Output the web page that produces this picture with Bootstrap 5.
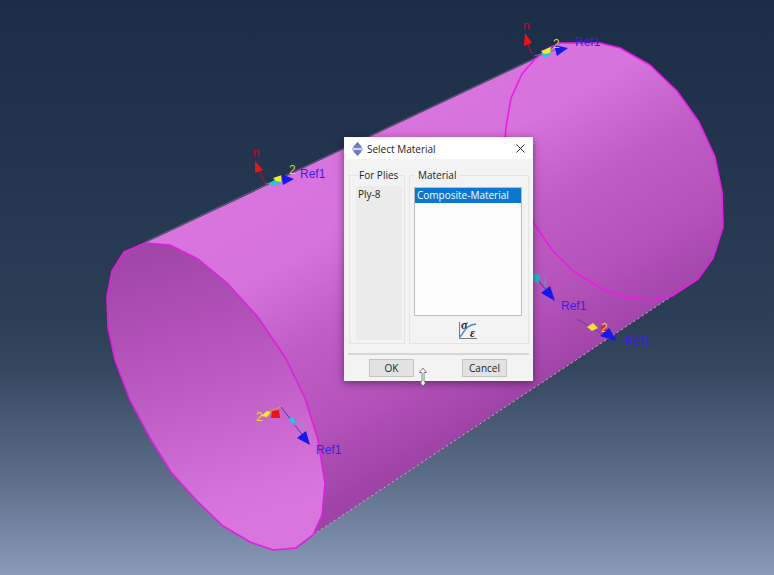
<!DOCTYPE html>
<html lang="en">
<head>
<meta charset="utf-8">
<meta name="viewport" content="width=device-width, initial-scale=1">
<title>Select Material</title>
<link href="https://cdn.jsdelivr.net/npm/bootstrap@5.3.0/dist/css/bootstrap.min.css" rel="stylesheet">
<style>
body { font-family: "Open Sans", "Noto Sans", sans-serif; font-size: 10px; line-height: 14px; color: #222; }
.viewport3d { background: linear-gradient(#1c2d47 0%, #24354f 30%, #2d3e57 56%, #35475f 64%, #5c6d89 83%, #8a9aba 100%); }
.scene text { font-family: "Liberation Sans", Arial, sans-serif; font-size: 12px; }
.dlg { left: 344px; top: 137px; width: 189px; background: #f3f3f3; box-shadow: 0 2px 8px rgba(30,0,40,.5); border: 1px solid #f8f8f8; }
.dlg-title { height: 21px; background: #fff; padding: 0 7px; }
.dlg h1 { font-size: 10px; line-height: 14px; }
.close-x { line-height: 0; }
.groups { padding: 9px 3px 9px 4px; gap: 4px; }
.group { border: 1px solid #e4e4e4; padding: 0 6px 3px 4px; min-width: 0; }
.group legend { font-size: 10px; line-height: 14px; height: 14px; margin-top: -7px; background: #f3f3f3; float: none; }
.plies { flex: 0 0 56px; padding: 0 2px 3px 6px; }
.plies legend { margin-left: 3px; }
.ply-list { background: #ebebeb; margin-top: 4px; padding: 1px 2px; }
.mat-list { height: 129px; margin-top: 5px; border: 1px solid #bdbdbd; border-radius: 0; background: #fdfdfd; overflow: hidden; font-size: 10px; outline: 0; }
.mat-list option { height: 15px; min-height: 15px; line-height: 15px; padding: 0 2px; }
.mat-list option:checked { background: #0a78d2 linear-gradient(#0a78d2, #0a78d2); color: #fff; -webkit-text-fill-color: #fff; }
.foot { border-top: 2px solid #d6d6d6; margin: 0 3px; padding: 4px 22px 3px 21px; }
.push { width: 45px; height: 18px; font-size: 10px; line-height: 14px; background: #e2e2e2; border: 1px solid #c4c4c4; color: #222; }
.pointer { left: 73px; top: 229px; }
.curve { overflow: visible; }
</style>
<script src="https://cdn.jsdelivr.net/npm/bootstrap@5.3.0/dist/js/bootstrap.bundle.min.js"></script>
</head>
<body>
<main class="viewport3d position-relative vh-100 overflow-hidden">
<svg class="scene d-block w-100 h-100" viewBox="0 0 774 575" preserveAspectRatio="xMinYMin slice" role="img" aria-label="Cylindrical shell with ply orientations">
  <defs>
    <linearGradient id="outer" gradientUnits="userSpaceOnUse" x1="340" y1="150" x2="492" y2="414">
      <stop offset="0" stop-color="#d973de"/><stop offset=".22" stop-color="#d773dc"/><stop offset=".5" stop-color="#bf5cc5"/><stop offset=".75" stop-color="#b553bb"/><stop offset="1" stop-color="#a043a7"/>
    </linearGradient>
    <linearGradient id="inner" gradientUnits="userSpaceOnUse" x1="165" y1="250" x2="240" y2="520">
      <stop offset="0" stop-color="#a146a8"/><stop offset=".3" stop-color="#b251b8"/><stop offset=".5" stop-color="#bc5bc2"/><stop offset=".9" stop-color="#d573da"/><stop offset="1" stop-color="#d876dd"/>
    </linearGradient>
  </defs>
  <path fill="url(#outer)" d="M145 243 535 59 560 43 600 43 620 48 650 65 677 91 699 122 715 157 722 192 723 227 713 258 698 279 672 296 313 535 200 400z"/>
  <path d="M145 242 535 58" stroke="#b47fc0" stroke-width="1" fill="none" opacity=".5"/>
  <path d="M313 535 672 296" stroke="#c9b6cf" stroke-width="1" stroke-dasharray="2 3" fill="none"/>
  <path id="front" fill="url(#inner)" stroke="#e01fe0" stroke-width="1.6" stroke-linejoin="round" d="M145 243 170 245 198 259 227 283 257 316 285 357 305 398 318 440 325 483 322 515 313 535 296 548 273 550 250 542 223 526 197 501 171 472 150 438 130 400 115 360 108 327 107 297 112 271 124 252z"/>
  <path fill="none" stroke="#ec1be6" stroke-width="1.6" stroke-linejoin="round" d="M535 59 547 49 560 43 600 43 620 48 650 65 677 91 699 122 715 157 722 192 723 227 713 258 698 279 672 296 652 300 628 298 600 288 573 271 552 250 535 225 515 178 505 140 506 127 511 98 522 74z"/>

  <!-- orientation triad, back edge -->
  <g>
    <path d="M532 54 527 42" stroke="#b5142b"/><path fill="#f21212" d="M525 33 532 43 524 46z"/>
    <text x="523" y="30" fill="#b5142b">n</text>
    <path d="M534 56 562 48" stroke="#5372a8"/><path fill="#25c6d6" d="M541 54 548 49 552 53 546 58z"/>
    <path fill="#f0f020" d="M541 51 551 47 550 53 544 54z"/>
    <path fill="#1518ec" d="M554 45 568 48 557 56z"/><text x="553" y="48" fill="#cfd83a">2</text>
    <text x="575" y="46" fill="#3b1fe0">Ref1</text>
  </g>
  <!-- orientation triad, upper side -->
  <g>
    <path d="M265 183 258 168" stroke="#b5142b"/><path fill="#f21212" d="M255 161 263 170 255 173z"/>
    <text x="253" y="157" fill="#b5142b">n</text>
    <path d="M265 184 290 178" stroke="#5372a8"/><path fill="#25c6d6" d="M268 184 276 179 281 182 276 186z"/>
    <path fill="#f0f020" d="M273 178 282 175 281 182 276 181z"/>
    <path fill="#1518ec" d="M281 174 294 179 283 185z"/><text x="289" y="174" fill="#d2d83c">2</text>
    <text x="300" y="178" fill="#3b1fe0">Ref1</text>
  </g>
  <!-- orientation triad, right side -->
  <g>
    <path d="M533 274 546 290" stroke="#4a3ca8"/><path fill="#1bbfc4" d="M533 273 540 275 538 284 533 280z"/>
    <path d="M545 278v9" stroke="#4fa0d8"/>
    <path fill="#1518ec" d="M541 293 550 286 555 301z"/><text x="561" y="310" fill="#3b1fe0">Ref1</text>
  </g>
  <!-- orientation triad, bottom edge -->
  <g>
    <path d="M577 319 602 334" stroke="#5a4aa6"/><path fill="#f0e22a" d="M587 327 593 323 598 328 592 331z"/>
    <path fill="#e8202a" d="M601 325h5v6h-5z"/><text x="601" y="332" fill="#e0d240">2</text>
    <path fill="#1518ec" d="M600 336 609 328 617 341z"/><text x="625" y="345" fill="#3b1fe0">Ref1</text>
  </g>
  <!-- orientation triad, inner face -->
  <g>
    <path d="M281 407 270 411" stroke="#e69a3a"/><path d="M281 407 304 437" stroke="#3d3fae"/>
    <path fill="#f5ee1a" d="M261 416 267 411 271 412 267 417z"/><path fill="#f21212" d="M272 411 279 410 280 418 271 418z"/>
    <text x="256" y="421" fill="#f0df1e">2</text>
    <path fill="#28c3ea" d="M288 419 294 417 296 426z"/><path d="M302 421v8" stroke="#72a5df"/>
    <path fill="#1518ec" d="M297 438 306 431 310 445z"/><text x="316" y="454" fill="#3b1fe0">Ref1</text>
  </g>
</svg>

<section class="dlg position-absolute d-flex flex-column" role="dialog" aria-labelledby="dlgTitle">
  <header class="dlg-title d-flex align-items-center">
    <svg width="11" height="14" viewBox="0 0 11 14" aria-hidden="true"><path fill="#6670b6" d="M5.500 0 9 4H2zM5.500 14 2 10h7zM0 7 3 4v6zM11 7 8 4v6z"/><rect x="1.500" y="3" width="8" height="8" rx="2" fill="#7480c4"/><path stroke="#eef" stroke-width="1.500" d="M1 7h9"/></svg>
    <h1 class="mb-0 ms-1 fw-normal flex-grow-1" id="dlgTitle">Select Material</h1>
    <button type="button" class="close-x border-0 bg-transparent p-0" aria-label="Close"><svg width="9" height="9" viewBox="0 0 9 9"><path d="M.5.5 8.500 8.500M8.500.5.5 8.500" stroke="#333" fill="none"/></svg></button>
  </header>
  <div class="groups d-flex">
    <fieldset class="group plies d-flex flex-column">
      <legend class="w-auto mb-0 p-0 text-nowrap align-self-start">For Plies</legend>
      <div class="ply-list flex-grow-1">Ply-8</div>
    </fieldset>
    <fieldset class="group flex-grow-1 d-flex flex-column">
      <legend class="w-auto mb-0 px-1 align-self-start" id="matLabel">Material</legend>
      <select class="mat-list w-100 p-0" size="8" aria-labelledby="matLabel"><option selected>Composite-Material</option></select>
      <button type="button" class="border-0 bg-transparent p-0 mt-1 align-self-center lh-1" aria-label="Edit material">
        <svg class="curve" width="20" height="20" viewBox="0 0 20 20"><path d="M1.500 2v16.500H19" stroke="#777" fill="none"/><path d="M2 17C7 11 8 5 18 4" stroke="#3a8fd0" stroke-width="1.500" fill="none"/><text x="3" y="9" font-family="Liberation Serif, serif" font-style="italic" font-weight="bold" font-size="12" fill="#222">σ</text><text x="12" y="17" font-family="Liberation Serif, serif" font-style="italic" font-weight="bold" font-size="12" fill="#222">ε</text></svg>
      </button>
    </fieldset>
  </div>
  <footer class="foot d-flex justify-content-between">
    <button type="button" class="push p-0">OK</button>
    <button type="button" class="push p-0">Cancel</button>
  </footer>
  <svg class="pointer position-absolute" width="10" height="20" viewBox="0 0 10 20" aria-hidden="true"><path d="M5 1 8.500 5.500H6V14L7.500 16 5 19 2.500 16 4 14V5.500H1.500z" fill="#fff" stroke="#666" stroke-width=".8"/></svg>
</section>
</main>
</body>
</html>
